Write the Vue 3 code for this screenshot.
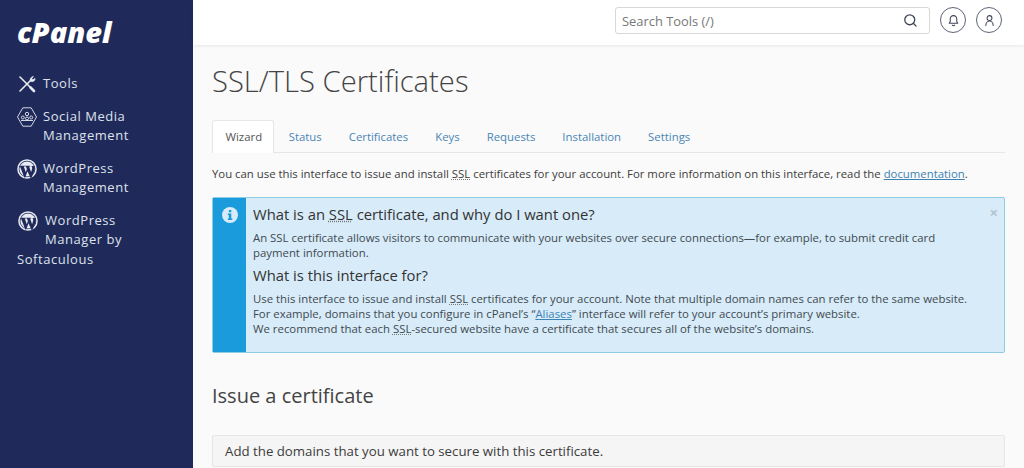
<script setup>
const tabs = ["Wizard", "Status", "Certificates", "Keys", "Requests", "Installation", "Settings"];
</script>

<template>
  <div class="page">
    <aside class="side">
      <div class="logo">cPanel</div>
      <nav class="menu">
        <a class="item one">
          <svg class="ico" viewBox="0 0 20 20" fill="none" stroke="#e8eaf2" stroke-width="1.600" stroke-linecap="round">
            <path d="M3 17 14.500 5.500" />
            <path d="M13.500 7c-.8-2 .2-4 2.800-4.500l-1.600 2.200 1 1.200 2.300-1.400c0 2.400-2 4-4.500 2.500" fill="#e8eaf2" stroke-width="0.8" />
            <path d="M3 3 17 17" />
            <path d="M13.500 13.500 17 17" stroke-width="2.600" />
          </svg>
          <span>Tools</span>
        </a>
        <a class="item">
          <svg class="ico" viewBox="0 0 20 20" fill="none" stroke="#e8eaf2" stroke-width="0.900">
            <path d="M5.800 .8h8.400L19.500 10l-5.300 9.200H5.800L.5 10z" />
            <circle cx="10" cy="7" r="1.700" />
            <circle cx="5.800" cy="10.500" r="1.500" />
            <circle cx="10" cy="11.500" r="1.500" />
            <circle cx="14.200" cy="10.500" r="1.500" />
            <path d="M4 13.500h12" />
          </svg>
          <span>Social Media<br />Management</span>
        </a>
        <a class="item">
          <svg class="ico" viewBox="0 0 20 20">
            <circle cx="10" cy="10" r="9.800" fill="#e8eaf2" />
            <circle cx="10" cy="10" r="8.300" fill="#1f2a5a" />
            <circle cx="10" cy="10" r="7.600" fill="#e8eaf2" />
            <path fill="#1f2a5a" d="M2.700 6.800h5.200v.6l-1.100.2 2 5.600 1.100-3.300-.9-2.300-.9-.2v-.6h5.100v.6l-1.100.2 2 5.600.9-3c.5-1.500 0-2.400-.6-3.200h3c.8 2.100.5 3.900-.4 6.100l-2.600 6h-.9L10.500 12.200 8.200 18.500h-.9z" />
          </svg>
          <span>WordPress<br />Management</span>
        </a>
        <a class="item last">
          <svg class="ico wp" viewBox="0 0 20 20">
            <circle cx="10" cy="10" r="9.800" fill="#e8eaf2" />
            <circle cx="10" cy="10" r="8.300" fill="#1f2a5a" />
            <circle cx="10" cy="10" r="7.600" fill="#e8eaf2" />
            <path fill="#1f2a5a" d="M2.700 6.800h5.200v.6l-1.100.2 2 5.600 1.100-3.300-.9-2.300-.9-.2v-.6h5.100v.6l-1.100.2 2 5.600.9-3c.5-1.500 0-2.400-.6-3.200h3c.8 2.100.5 3.900-.4 6.100l-2.600 6h-.9L10.500 12.200 8.200 18.500h-.9z" />
          </svg>
          <span>WordPress<br />Manager by</span>
          <span class="tail">Softaculous</span>
        </a>
      </nav>
    </aside>

    <div class="main">
      <header class="top">
        <div class="search">
          <span>Search Tools (/)</span>
          <svg viewBox="0 0 16 16" width="15" height="15" fill="none" stroke="#3f4657" stroke-width="1.400" stroke-linecap="round">
            <circle cx="7.200" cy="7.200" r="5.300" />
            <path d="m11 11 3 3" />
          </svg>
        </div>
        <button class="round">
          <svg viewBox="0 0 16 16" width="13" height="13" fill="none" stroke="#3f4657" stroke-width="1.300" stroke-linejoin="round">
            <path d="M8 2c-2.500 0-4 1.800-4 4v3.200L2.800 11.500h10.400L12 9.200V6c0-2.200-1.500-4-4-4z" />
            <path d="M6.500 13.800c.7.700 2.300.7 3 0" stroke-linecap="round" />
          </svg>
        </button>
        <button class="round">
          <svg viewBox="0 0 16 16" width="13" height="13" fill="none" stroke="#3f4657" stroke-width="1.300" stroke-linecap="round">
            <circle cx="8" cy="5" r="3" />
            <path d="M3.500 14c0-3 2-5.500 4.500-5.500s4.500 2.500 4.500 5.500" />
          </svg>
        </button>
      </header>

      <main class="content">
        <h1>SSL/TLS Certificates</h1>
        <ul class="tabs">
          <li v-for="(t, i) in tabs" :key="t" :class="{ active: i === 0 }">{{ t }}</li>
        </ul>
        <p class="intro">
          You can use this interface to issue and install <abbr>SSL</abbr> certificates for your account. For more information on this interface, read the <a class="link">documentation</a>.
        </p>

        <section class="alert">
          <div class="alert-side">
            <svg viewBox="0 0 16 16" width="16" height="16">
              <circle cx="8" cy="8" r="8" fill="#d7ebf9" />
              <rect x="6.900" y="3" width="2.400" height="2.300" fill="#1a9bdb" />
              <path fill="#1a9bdb" d="M5.800 6.500h3.500v5h1v1.400H5.800v-1.400h1V7.900h-1z" />
            </svg>
          </div>
          <div class="alert-body">
            <span class="close">×</span>
            <h2>What is an <abbr>SSL</abbr> certificate, and why do I want one?</h2>
            <p>An SSL certificate allows visitors to communicate with your websites over secure connections—for example, to submit credit card payment information.</p>
            <h2 class="second">What is this interface for?</h2>
            <p>
              Use this interface to issue and install <abbr>SSL</abbr> certificates for your account. Note that multiple domain names can refer to the same website.<br />
              For example, domains that you configure in cPanel’s “<a class="link">Aliases</a>” interface will refer to your account’s primary website.<br />
              We recommend that each <abbr>SSL</abbr>-secured website have a certificate that secures all of the website’s domains.
            </p>
          </div>
        </section>

        <h3>Issue a certificate</h3>
        <div class="panel">Add the domains that you want to secure with this certificate.</div>
      </main>
    </div>
  </div>
</template>

<style>
html,
body {
  margin: 0;
  height: 468px;
  overflow: hidden;
}
</style>

<style scoped>
.page {
  display: flex;
  width: 1024px;
  height: 468px;
  overflow: hidden;
  font-family: "Open Sans", sans-serif;
  background: #fafafa;
  color: #3c3c3c;
}
.side {
  width: 193px;
  flex: none;
  box-sizing: border-box;
  padding: 16px 17px 0;
  background: #1f2a5a;
  color: #dfe2ec;
}
.logo {
  height: 32px;
  font-size: 29px;
  line-height: 32px;
  font-weight: 800;
  font-style: italic;
  color: #fff;
}
.menu {
  margin-top: 26px;
  display: flex;
  flex-direction: column;
  gap: 13px;
}
.item {
  display: flex;
  flex-wrap: wrap;
  font-size: 13px;
  line-height: 19.500px;
  letter-spacing: 0.550px;
}
.one {
  margin-bottom: -0.500px;
}
.ico {
  width: 20px;
  height: 20px;
  margin-right: 6px;
  flex: none;
}
.wp {
  margin-left: 1px;
  margin-right: 7px;
}
.last span:first-of-type {
  flex: 0 0 120px;
}
.tail {
  flex: 0 0 100%;
}
.main {
  flex: 1;
  min-width: 0;
}
.top {
  height: 45px;
  box-sizing: border-box;
  padding: 7px 22px 0 0;
  display: flex;
  justify-content: flex-end;
  gap: 10px;
  background: #fff;
  box-shadow: 0 1px 3px rgba(0, 0, 0, 0.08);
}
.search {
  width: 315px;
  height: 27px;
  box-sizing: border-box;
  padding: 0 11px 0 6px;
  display: flex;
  align-items: center;
  justify-content: space-between;
  border: 1px solid #d8d8d8;
  border-radius: 3px;
  font-size: 12.900px;
  color: #777;
}
.round {
  width: 26px;
  height: 26px;
  padding: 0;
  display: flex;
  align-items: center;
  justify-content: center;
  border: 1px solid #5d6478;
  border-radius: 50%;
  background: #fff;
}
.content {
  padding: 0 19px 0 19px;
}
h1 {
  margin: 17px 0 0;
  font-size: 29.200px;
  line-height: 38px;
  font-weight: 300;
  color: #444;
}
.tabs {
  margin: 20px 0 0;
  padding: 0;
  list-style: none;
  display: flex;
  height: 32px;
  border-bottom: 1px solid #e6e6e6;
  font-size: 11.380px;
  color: #4a86b5;
}
.tabs li {
  padding: 0 13.500px;
  line-height: 33px;
}
.tabs li.active {
  padding: 0 10.500px 0 12.500px;
  margin-right: 1.500px;
  height: 33px;
  box-sizing: border-box;
  border: 1px solid #e6e6e6;
  border-bottom: 0;
  border-radius: 3px 3px 0 0;
  background: #fff;
  color: #555;
  line-height: 32px;
}
.intro {
  margin: 12px 0 0;
  font-size: 11.370px;
  line-height: 17px;
  white-space: nowrap;
}
abbr {
  text-decoration: underline dotted #777;
  text-underline-offset: 1px;
}
.link {
  color: #3d82b5;
  text-decoration: underline;
}
.alert {
  margin-top: 15px;
  display: flex;
  width: 793px;
  height: 156px;
  box-sizing: border-box;
  border: 1px solid #8fcbe4;
  border-radius: 2px;
  background: #d7ebf9;
}
.alert-side {
  width: 33px;
  flex: none;
  background: #1a9bdb;
  text-align: center;
  padding-top: 8px;
  box-sizing: border-box;
}
.alert-body {
  position: relative;
  flex: 1;
  padding: 6px 28px 0 7px;
  font-size: 11.380px;
  line-height: 15px;
  white-space: nowrap;
}
.alert-body h2 {
  margin: 0 0 6px;
  font-size: 14.800px;
  line-height: 20px;
  font-weight: 500;
  color: #333;
}
.alert-body h2.second {
  margin: 5px 0 6px;
}
.alert-body p {
  margin: 0;
  white-space: normal;
  color: #3f4a50;
}
.close {
  position: absolute;
  top: 4px;
  right: 6px;
  font-size: 15px;
  line-height: 20px;
  font-weight: 700;
  color: #b4c4cf;
}
h3 {
  margin: 29px 0 0;
  font-size: 20px;
  line-height: 28px;
  font-weight: 400;
  color: #444;
}
.panel {
  margin-top: 25px;
  width: 793px;
  height: 32px;
  box-sizing: border-box;
  padding: 0 12px;
  border: 1px solid #e6e6e6;
  border-radius: 2px;
  background: #f5f5f5;
  font-size: 13.250px;
  line-height: 30px;
}
</style>
